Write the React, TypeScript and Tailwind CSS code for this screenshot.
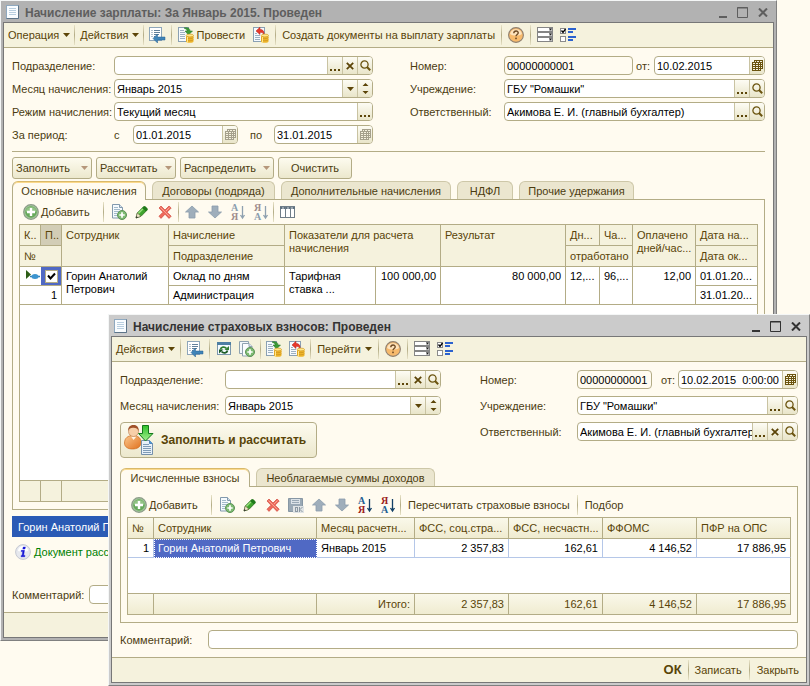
import type { ReactNode } from "react";
import { clsx } from "clsx";

/* ---------- icons ---------- */

function Svg({ children, size = 16 }: { children: ReactNode; size?: number }) {
  return (
    <svg width={size} height={size} viewBox={`0 0 ${size} ${size}`} className="block shrink-0 overflow-visible" aria-hidden="true">
      {children}
    </svg>
  );
}

function Caret({ color = "#5c4508" }: { color?: string }) {
  return (
    <svg width="7" height="4" viewBox="0 0 7 4" className="block shrink-0" aria-hidden="true">
      <path d="M0 0h7L3.5 4z" fill={color} />
    </svg>
  );
}

function DocIcon() {
  return (
    <Svg>
      <rect x="1.5" y="1.5" width="12" height="13" fill="#fafdff" stroke="#8fa9c0" />
      <path d="M1.5 14.5h12v-13" fill="none" stroke="#5d7488" />
      <path d="M4 4.5h7M4 6.5h7M4 8.5h7M4 10.5h7" stroke="#b9cfe0" />
    </Svg>
  );
}

function ReturnIcon() {
  return (
    <Svg>
      <rect x="0.5" y="0.5" width="12" height="13" fill="#fff" stroke="#8ea6b9" />
      <path d="M2.5 3.5h1M2.5 5.5h1M2.5 7.5h1M2.5 9.5h1M5 3.5h6M5 5.5h6M5 7.5h5M5 9.5h1" stroke="#62809a" />
      <path d="M4 11.5l4.500-4.500v3H16v3H8.500v3z" fill="#3f84b8" stroke="#2a6290" strokeWidth="0.5" />
    </Svg>
  );
}

function Coins() {
  return (
    <>
      <path d="M8 8.5v6c0 .8 1.600 1.300 3.800 1.300s3.700-.5 3.700-1.300v-6z" fill="#eeb62c" />
      <ellipse cx="11.8" cy="8.5" rx="3.7" ry="1.4" fill="#ffe78a" stroke="#c98f1a" strokeWidth="0.6" />
      <path d="M8 10.6c.6 1.400 6.800 1.400 7.500 0M8 12.700c.6 1.400 6.800 1.400 7.500 0" fill="none" stroke="#c58a1a" strokeWidth="0.6" />
      <path d="M9.500 10v5.500" stroke="#ffe68c" />
    </>
  );
}

function PostIcon() {
  return (
    <Svg>
      <rect x="0.5" y="0.5" width="10" height="14" fill="#f6fafd" stroke="#8aa0b3" />
      <path d="M2 3.5h4M2 5.5h5M2 7.5h5M2 9.5h5M2 11.5h5" stroke="#9cb0c2" />
      <path d="M6 1c3-1 6 0 6 3h2.500L10.500 8 7 4h2.200C9 2.800 8 1.800 6 1z" fill="#3a9a35" stroke="#1f6e20" strokeWidth="0.5" />
      <Coins />
    </Svg>
  );
}

function UnpostIcon() {
  return (
    <Svg>
      <rect x="0.5" y="0.5" width="11" height="14" fill="#f6fafd" stroke="#8aa0b3" />
      <path d="M2 6.500h2M2 8.500h5M2 10.500h5M2 12.500h5" stroke="#9cb0c2" />
      <path d="M3 4l4-3.800v2.300c3 0 4.500 1.800 4 5.500-.8-2-1.800-2.700-4-2.700v2.200z" fill="#e8392b" stroke="#b51f16" strokeWidth="0.5" />
      <Coins />
    </Svg>
  );
}

function HelpIcon() {
  return (
    <Svg>
      <circle cx="8" cy="8" r="7.4" fill="#f7ba6c" stroke="#8f8071" strokeWidth="1.1" />
      <path d="M2 7a6.200 6.200 0 0 1 12 0c-3 2-9 2-12 0z" fill="#fde3bd" />
      <path d="M5.800 6.200c0-3 4.600-2.800 4.400-.2-.1 1.500-2.200 1.600-2.200 3.300" fill="none" stroke="#6e4a24" strokeWidth="1.4" />
      <rect x="7.2" y="10.6" width="1.6" height="1.6" fill="#6e4a24" />
    </Svg>
  );
}

function ListIcon() {
  return (
    <Svg>
      {[0, 5, 10].map((y) => (
        <g key={y}>
          <rect x="0.5" y={y + 0.5} width="15" height="4" fill="#fff" stroke="#858585" />
          <rect x="12" y={y + 1} width="3" height="3" fill="#c4c4c4" />
          <path d={`M12 ${y + 1.500}h3l-1.500 2z`} fill="#1d1d1d" />
        </g>
      ))}
    </Svg>
  );
}

function ChecksIcon() {
  return (
    <Svg>
      <rect x="0.5" y="1.5" width="5" height="5" fill="#fff" stroke="#8b8b8b" />
      <path d="M1.500 3.500l1.500 2 2.500-3.500" fill="none" stroke="#000" strokeWidth="1.3" />
      <rect x="0.5" y="9.5" width="5" height="5" fill="#fff" stroke="#8b8b8b" />
      <path d="M8 2h8M8 10h8M8 5h5M8 13h5" stroke="#2b62cf" strokeWidth="2" />
    </Svg>
  );
}

function RefreshIcon() {
  return (
    <Svg>
      <rect x="1.5" y="2.5" width="13" height="11" fill="#f4faff" stroke="#7c97ad" />
      <path d="M1 2.500h14" stroke="#4d7ea3" strokeWidth="3" />
      <path d="M4.500 8.500c.5-2.500 4-3.200 6-1" fill="none" stroke="#2f7d32" strokeWidth="1.8" />
      <path d="M8.500 9h4.500V5z" fill="#2f7d32" />
      <path d="M11.500 9.500c-.5 2.500-4 3.200-6 1" fill="none" stroke="#1d5c26" strokeWidth="1.8" />
      <path d="M7.500 8.500H3v4z" fill="#1d5c26" />
    </Svg>
  );
}

function PlusBadge() {
  return (
    <>
      <circle cx="11" cy="11" r="4.5" fill="#7dbb72" stroke="#5c9157" />
      <path d="M11 8.300v5.400M8.300 11h5.400" stroke="#fff" strokeWidth="1.7" />
    </>
  );
}

function CopyIcon() {
  return (
    <Svg>
      <path d="M0.500 0.500h9v12h-9z" fill="#f3f8fb" stroke="#8fa2b0" />
      <path d="M3.500 2.500h6.500l3 3v9.500h-9.500z" fill="#fbfdff" stroke="#8fa2b0" />
      <path d="M10 2.500v3h3" fill="#dfe9f0" stroke="#8fa2b0" />
      <PlusBadge />
    </Svg>
  );
}

function AddDocIcon() {
  return (
    <Svg>
      <path d="M1.500 0.500h7l3 3v10.500h-10z" fill="#f5fafd" stroke="#8299ad" />
      <path d="M8.500 0.500v3h3" fill="#d5e2ec" stroke="#8299ad" />
      <path d="M3 3.500h4M3 5.500h6M3 7.500h5M3 9.500h3M3 11.500h3" stroke="#a3bacb" />
      <PlusBadge />
    </Svg>
  );
}

function AddIcon() {
  return (
    <Svg>
      <circle cx="8" cy="8" r="7.3" fill="#a3c79a" stroke="#8c9c88" strokeWidth="1.2" />
      <circle cx="8" cy="8" r="5.8" fill="#67a95c" />
      <path d="M2.500 7.500a5.600 5.600 0 0 1 11 0c-3 1.500-8 1.500-11 0z" fill="#93c486" />
      <path d="M8 4v8M4 8h8" stroke="#fff" strokeWidth="2.4" />
    </Svg>
  );
}

function PencilIcon() {
  return (
    <Svg>
      <path d="M2 14l1.300-5L9.500 2.800c1.200-1 4.500 1.700 3.700 3.200L7 12.300z" fill="#3fa52e" stroke="#2a6d20" strokeWidth="0.8" />
      <path d="M4.300 9.500l6-6" stroke="#9be07f" strokeWidth="1.3" />
      <path d="M9.500 2.800c1.200-1 4.500 1.700 3.700 3.200l-1.300 1.200-3.700-3z" fill="#1f7a1b" />
      <path d="M2 14l1.300-5 3.700 3.300z" fill="#f4ecd0" stroke="#69623e" strokeWidth="0.6" />
      <path d="M2 14l.5-2 1.500 1.400z" fill="#222" />
    </Svg>
  );
}

function DeleteIcon() {
  return (
    <Svg>
      <path d="M2 4l2-2 4 4 4-4 2.200 2-4.200 4.200 4.200 4-2.200 2.200-4-4.200-4 4.200-2-2.200 4-4z" fill="#ee6a5b" stroke="#d04a40" strokeWidth="0.7" />
      <path d="M3.500 3.500l9 9M12.500 3.500l-3.500 3.500" stroke="#f9a393" />
    </Svg>
  );
}

function ArrowIcon({ down }: { down?: boolean }) {
  return (
    <Svg>
      <path
        d={down ? "M8 14L1.500 8H5V2h6v6h3.500z" : "M8 2l6.500 6H11v6H5V8H1.500z"}
        fill="#9faebb"
        stroke="#8b9dac"
        strokeWidth="0.8"
      />
    </Svg>
  );
}

function SortIcon({ top, bottom, active }: { top: string; bottom: string; active?: boolean }) {
  const color = (letter: string) => (active ? (letter === "А" ? "#1f5f93" : "#9b1d1d") : letter === "А" ? "#8b9eae" : "#a08d8d");
  return (
    <Svg>
      <g fontFamily="'Liberation Serif', serif" fontSize="10" fontWeight="bold">
        <text x="1" y="7" fill={color(top)}>{top}</text>
        <text x="1" y="16" fill={color(bottom)}>{bottom}</text>
      </g>
      <path d="M12.500 2v11M10.500 11l2 3 2-3" fill="none" stroke={active ? "#123f66" : "#8fa1b0"} strokeWidth="1.3" />
    </Svg>
  );
}

function TableIcon() {
  return (
    <Svg>
      <rect x="0.5" y="2.5" width="14" height="11" fill="#fff" stroke="#6f7d88" />
      <path d="M0 4h15" stroke="#60717f" strokeWidth="2" />
      <path d="M2 4h2M7 4h2M11 4h2" stroke="#d5dde3" />
      <path d="M5.500 3v10M10.500 3v10" stroke="#6f7d88" />
    </Svg>
  );
}

function SaveIcon() {
  return (
    <Svg>
      <path d="M0.500 1.500h14v13h-14z" fill="#9aa9b5" stroke="#8797a4" />
      <rect x="3" y="2" width="9" height="5" fill="#dbe2e7" />
      <path d="M4 3.500h7M4 5.500h7" stroke="#9aa9b5" />
      <rect x="5" y="9" width="11" height="7" fill="#dfe3e4" />
      <g fill="none" stroke="#8b98a2">
        <rect x="7.5" y="10.5" width="2" height="4" />
        <path d="M11.500 10v5M14.500 10l-2.500 2.500 2.500 2.500" />
      </g>
    </Svg>
  );
}

function CalendarIcon({ dim }: { dim?: boolean }) {
  const c = dim ? "#a5a08c" : "#6b540f";
  return (
    <svg width="11" height="11" viewBox="0 0 11 11" className="block" aria-hidden="true">
      <path d="M2 0h9v9H9v2H0V2h2z" fill={c} />
      <path
        d="M3 1h1v1H3zM5 1h2v1H5zM8 1h2v1H8zM1 3h2v1H1zM4 3h2v1H4zM7 3h1v1H7zM9 3h1v1H9zM1 5h2v1H1zM4 5h2v1H4zM7 5h1v1H7zM9 5h1v1H9zM1 7h2v1H1zM4 7h2v1H4zM7 7h1v1H7zM9 7h1v1H9zM1 9h2v1H1zM4 9h2v1H4zM7 9h1v1H7z"
        fill="#f6f2df"
      />
    </svg>
  );
}

function SearchIcon() {
  return (
    <svg width="11" height="11" viewBox="0 0 11 11" className="block" aria-hidden="true">
      <circle cx="4.5" cy="4.5" r="3.6" fill="none" stroke="#6b540f" strokeWidth="1.3" />
      <path d="M7 7l3.200 3.200" stroke="#6b540f" strokeWidth="2" />
    </svg>
  );
}

function ClearIcon() {
  return (
    <svg width="8" height="8" viewBox="0 0 8 8" className="block" aria-hidden="true">
      <path d="M0.800 0.800l6.400 6.400M7.200 0.800l-6.400 6.400" stroke="#5c4508" strokeWidth="1.8" />
    </svg>
  );
}

function DotsIcon() {
  return (
    <svg width="10" height="10" viewBox="0 0 10 10" className="block" aria-hidden="true">
      <path d="M0 8h2v2H0zM4 8h2v2H4zM8 8h2v2H8z" fill="#5c4508" />
    </svg>
  );
}

function SpinIcon() {
  return (
    <svg width="7" height="11" viewBox="0 0 7 11" className="block" aria-hidden="true">
      <path d="M0.500 3h6L3.500 0zM0.500 8h6L3.500 11z" fill="#5c4508" />
    </svg>
  );
}

function PersonIcon() {
  return (
    <svg width="30" height="30" viewBox="0 0 30 30" className="block shrink-0" aria-hidden="true">
      <defs>
        <linearGradient id="coat" x1="0" y1="0" x2="1" y2="1">
          <stop offset="0" stopColor="#fbc98f" />
          <stop offset="1" stopColor="#e0701c" />
        </linearGradient>
        <linearGradient id="down" x1="0" y1="0" x2="0" y2="1">
          <stop offset="0" stopColor="#2fc02a" />
          <stop offset="1" stopColor="#a4f08e" />
        </linearGradient>
      </defs>
      <path d="M0.500 18c0-5 3.500-7.500 8.500-7.500s8 2.500 8 7-4 6.500-8.500 6.500-8-2-8-6z" fill="url(#coat)" stroke="#cf6a1c" strokeWidth="0.7" />
      <path d="M7 11.500l2.500 3.500 3-3.500z" fill="#fff3e2" />
      <circle cx="9.500" cy="6.500" r="5" fill="#f7cfa8" stroke="#b5794b" strokeWidth="0.6" />
      <path d="M4 6c-.5-8 11.500-8.500 10.700 0-1-2.500-3-3.500-6-3.200C6.500 3 5 3.500 4 6z" fill="#a0512a" />
      <path d="M17.500 15.500h8l3 3v11h-11z" fill="#e7f0f8" stroke="#7590ab" />
      <path d="M25.500 15.500v3h3" fill="#4e9be0" stroke="#4e86ba" />
      <path d="M19 19.500h6M19 21.500h8M19 23.500h8M19 25.500h8M19 27.500h8" stroke="#7f9bb6" />
      <path d="M18.500 0.500h6v8H29L21.500 16 14.500 8.500h4z" fill="url(#down)" stroke="#12781a" />
    </svg>
  );
}

function InfoIcon() {
  return (
    <Svg>
      <circle cx="8" cy="8" r="7.4" fill="#e6e8ee" stroke="#c6c9d2" />
      <path d="M3 7a5 5 0 0 1 10 0c-3 1-7 1-10 0z" fill="#fff" />
      <path d="M8.200 3h2.200l-.4 2H7.800zM6.300 6.300h3.200L8.600 11.400H10l-.2 1.300H6l.2-1.300h.9l.6-3.800H6.100z" fill="#1313d6" stroke="#1313d6" strokeWidth="0.4" />
    </Svg>
  );
}

/* ---------- shared controls ---------- */

function Sep({ className }: { className?: string }) {
  return <span className={clsx("h-5 w-px shrink-0 bg-linear-to-b from-[#e8e3c8] via-[#b3ac86] to-[#e8e3c8]", className)} />;
}

function IconButton({ label, children }: { label: string; children: ReactNode }) {
  return (
    <button type="button" aria-label={label} className="shrink-0">
      {children}
    </button>
  );
}

function MenuButton({ children }: { children: ReactNode }) {
  return (
    <button type="button" className="flex items-center gap-1 whitespace-nowrap">
      {children}
      <Caret />
    </button>
  );
}

type Action = "dots" | "clear" | "search" | "drop" | "spin" | "calendar" | "calendarDim";

const actions: Record<Action, { label: string; icon: ReactNode }> = {
  dots: { label: "Выбрать", icon: <DotsIcon /> },
  clear: { label: "Очистить поле", icon: <ClearIcon /> },
  search: { label: "Открыть", icon: <SearchIcon /> },
  drop: { label: "Показать список", icon: <Caret /> },
  spin: { label: "Изменить значение", icon: <SpinIcon /> },
  calendar: { label: "Календарь", icon: <CalendarIcon /> },
  calendarDim: { label: "Календарь", icon: <CalendarIcon dim /> },
};

interface FieldProps {
  id: string;
  value?: string;
  buttons?: Action[];
  className?: string;
  readOnly?: boolean;
}

function Field({ id, value = "", buttons = [], className = "flex-1", readOnly }: FieldProps) {
  return (
    <div
      className={clsx(
        "flex h-[19px] min-w-0 overflow-hidden rounded border border-[#b3ac86]",
        readOnly ? "bg-[#fffbf0]" : "bg-white",
        className,
      )}
    >
      <input
        id={id}
        defaultValue={value}
        readOnly={readOnly}
        className="w-full min-w-0 flex-1 bg-transparent pl-0.5 text-black outline-none"
      />
      {buttons.map((b) => (
        <button
          key={b}
          type="button"
          aria-label={actions[b].label}
          className="flex w-[15px] shrink-0 items-center justify-center border-l border-[#c9c3a2] bg-linear-to-b from-[#fdfcf4] to-[#e9e5c9]"
        >
          {actions[b].icon}
        </button>
      ))}
    </div>
  );
}

function Row({ id, label, labelClass, children }: { id: string; label: string; labelClass: string; children: ReactNode }) {
  return (
    <div className="flex items-center">
      <label htmlFor={id} className={clsx("shrink-0 whitespace-nowrap", labelClass)}>
        {label}
      </label>
      {children}
    </div>
  );
}

function Tabs({ items }: { items: { title: string; width: string }[] }) {
  return (
    <div role="tablist" className="flex items-end gap-1.5">
      {items.map(({ title, width }, i) => (
        <button
          key={title}
          type="button"
          role="tab"
          aria-selected={i === 0}
          className={clsx(
            "rounded-t-md border border-b-0 text-center whitespace-nowrap",
            width,
            i === 0
              ? "relative -mb-px h-[19px] border-[#b3ac86] border-t-[#d9b96a] bg-[#fffbf0] shadow-[inset_0_1px_0_#fbd98c]"
              : "h-[18px] border-[#cdc7a8] bg-[#ebe6cf]",
          )}
        >
          {title}
        </button>
      ))}
    </div>
  );
}

function Window({ title, active, className, children }: { title: string; active?: boolean; className: string; children: ReactNode }) {
  return (
    <section
      className={clsx(
        "border border-t-[#f4f6f6] border-r-[#808080] border-b-[#808080] border-l-[#f4f6f6] px-0.5 pb-0.5",
        active ? "bg-[#cbcbcb] text-[#333]" : "bg-[#b2b2b2] text-[#5e5e5e]",
        className,
      )}
    >
      <header className="flex h-[21px] items-center pl-0.5">
        <DocIcon />
        <h1 className="ml-1 flex-1 truncate pt-0.5 text-[12px] font-bold">{title}</h1>
        <div className="flex items-center gap-2.5 pt-0.5 pr-1.5">
          <button type="button" aria-label="Свернуть" className="pt-2">
            <svg width="8" height="2" className="block"><path d="M0 1h8" stroke="currentColor" strokeWidth="2" /></svg>
          </button>
          <button type="button" aria-label="Развернуть">
            <svg width="11" height="11" className="block">
              <path d="M.5 .5h10v10H.5zM0 1h11" fill="none" stroke="currentColor" />
            </svg>
          </button>
          <button type="button" aria-label="Закрыть окно">
            <svg width="10" height="9" className="block"><path d="M1 .5l8 8M9 .5l-8 8" stroke="currentColor" strokeWidth="2" /></svg>
          </button>
        </div>
      </header>
      <div className="border border-[#777] bg-[#fffbf0] text-[#4b3c10]">{children}</div>
    </section>
  );
}

function Toolbar({ children }: { children: ReactNode }) {
  return (
    <div className="flex h-[25px] items-center border-b border-[#b3ac86] bg-[#f5f2dd] pl-1 text-[#594408]">{children}</div>
  );
}

function AddButton() {
  return (
    <button type="button" className="flex w-[75px] shrink-0 items-center gap-0.5 whitespace-nowrap">
      <AddIcon />
      <span>
        <u>Д</u>обавить
      </span>
    </button>
  );
}

/* ---------- payroll window ---------- */

const cell = "border-r border-b border-[#b3ac86]";
const th = `${cell} px-1 pt-1 text-left align-top font-normal whitespace-nowrap`;
const td = `${cell} px-1 pt-[3px] text-left align-top whitespace-nowrap`;
const tdNum = `${cell} pt-[3px] pr-1 text-right align-top whitespace-nowrap`;

function PayrollTable() {
  return (
    <table className="w-full table-fixed border-separate border-spacing-0 border-t border-l border-[#b3ac86] bg-white leading-[13px] text-black">
      <colgroup>
        <col className="w-[21px]" />
        <col className="w-[21px]" />
        <col className="w-[107px]" />
        <col className="w-[116px]" />
        <col className="w-[91px]" />
        <col className="w-[65px]" />
        <col />
        <col className="w-[34px]" />
        <col className="w-[33px]" />
        <col className="w-[63px]" />
        <col className="w-[62px]" />
      </colgroup>
      <thead className="bg-[#f5f2dd] text-[#594408]">
        <tr className="h-[21px]">
          <th className={th}>К..</th>
          <th className={clsx(th, "bg-[#d2cdb6]")}>П..</th>
          <th rowSpan={2} className={th}>Сотрудник</th>
          <th className={th}>Начисление</th>
          <th rowSpan={2} colSpan={2} className={th}>
            Показатели для расчета
            <br />
            начисления
          </th>
          <th rowSpan={2} className={th}>Результат</th>
          <th className={th}>Дн...</th>
          <th className={th}>Ча...</th>
          <th rowSpan={2} className={th}>
            Оплачено
            <br />
            дней/час...
          </th>
          <th className={th}>Дата на...</th>
        </tr>
        <tr className="h-[21px]">
          <th colSpan={2} className={th}>№</th>
          <th className={th}>Подразделение</th>
          <th colSpan={2} className={th}>отработано</th>
          <th className={th}>Дата ок...</th>
        </tr>
      </thead>
      <tbody>
        <tr className="h-[19px]">
          <td className="border-b border-[#b3ac86] p-0">
            <svg width="20" height="18" viewBox="0 0 20 18" className="block" aria-hidden="true">
              <path d="M6 3v9l5-4.500z" fill="#2c5d16" />
              <path d="M10 9.500h10" stroke="#2f7fb5" strokeWidth="1.5" />
              <ellipse cx="15" cy="9.500" rx="3.500" ry="2.500" fill="#3c94cf" />
            </svg>
          </td>
          <td className="border-r border-b border-[#b3ac86] bg-[#5069c4] p-0">
            <label className="relative mx-auto block size-[13px]">
              <input
                type="checkbox"
                defaultChecked
                aria-label="Проверено"
                className="peer block size-[13px] appearance-none border border-[#b3ac86] bg-white"
              />
              <svg width="13" height="13" viewBox="0 0 13 13" className="absolute inset-0 hidden peer-checked:block" aria-hidden="true">
                <path d="M3 5.500l2.500 3 4.500-5" fill="none" stroke="#000" strokeWidth="2" />
              </svg>
            </label>
          </td>
          <td rowSpan={2} className={td}>
            Горин Анатолий
            <br />
            Петрович
          </td>
          <td className={td}>Оклад по дням</td>
          <td rowSpan={2} className={td}>
            Тарифная
            <br />
            ставка ...
          </td>
          <td rowSpan={2} className={tdNum}>100 000,00</td>
          <td rowSpan={2} className={tdNum}>80 000,00</td>
          <td rowSpan={2} className={td}>12,...</td>
          <td rowSpan={2} className={td}>96,...</td>
          <td rowSpan={2} className={tdNum}>12,00</td>
          <td className={td}>01.01.20...</td>
        </tr>
        <tr className="h-[19px]">
          <td colSpan={2} className={tdNum}>1</td>
          <td className={td}>Администрация</td>
          <td className={td}>31.01.20...</td>
        </tr>
        <tr className="h-44">
          <td colSpan={11} className={cell} />
        </tr>
      </tbody>
      <tfoot className="bg-[#f5f2dd]">
        <tr className="h-[21px]">
          <td className={cell} />
          <td className={cell} />
          <td className={cell} colSpan={2} />
          <td className={cell} colSpan={2} />
          <td className={cell} />
          <td className={cell} />
          <td className={cell} />
          <td className={cell} />
          <td className={cell} />
        </tr>
      </tfoot>
    </table>
  );
}

const commandButton =
  "flex h-[22px] items-center rounded-[3px] border border-[#b3ac86] bg-linear-to-b from-[#fdfbef] to-[#ece8cd] px-[3px] whitespace-nowrap";

function PayrollWindow() {
  return (
    <Window title="Начисление зарплаты: За Январь 2015. Проведен" className="mr-[33px]">
      <Toolbar>
        <MenuButton>Операция</MenuButton>
        <Sep className="mr-[5px] ml-1" />
        <MenuButton>Действия</MenuButton>
        <Sep className="mr-[5px] ml-1" />
        <IconButton label="Вернуться"><ReturnIcon /></IconButton>
        <Sep className="mx-1.5" />
        <button type="button" className="flex items-center gap-0.5">
          <PostIcon />
          Провести
        </button>
        <span className="w-2" />
        <IconButton label="Отмена проведения"><UnpostIcon /></IconButton>
        <Sep className="mx-1.5" />
        <button type="button" className="whitespace-nowrap">Создать документы на выплату зарплаты</button>
        <Sep className="mx-1.5" />
        <IconButton label="Справка"><HelpIcon /></IconButton>
        <Sep className="mx-1.5" />
        <IconButton label="Список"><ListIcon /></IconButton>
        <span className="w-[7px]" />
        <IconButton label="Настройка"><ChecksIcon /></IconButton>
      </Toolbar>

      <div className="px-2 pt-2">
        <form className="flex items-start gap-[37px]">
          <div className="flex w-[361px] shrink-0 flex-col gap-1">
            <Row id="p-dept" label="Подразделение:" labelClass="w-[102px]">
              <Field id="p-dept" buttons={["dots", "clear", "search"]} />
            </Row>
            <Row id="p-month" label="Месяц начисления:" labelClass="w-[102px]">
              <Field id="p-month" value="Январь 2015" buttons={["drop", "spin"]} />
            </Row>
            <Row id="p-mode" label="Режим начисления:" labelClass="w-[102px]">
              <Field id="p-mode" value="Текущий месяц" buttons={["dots"]} />
            </Row>
            <div className="flex items-center">
              <span className="w-[102px]">За период:</span>
              <label htmlFor="p-from" className="w-[19px]">с</label>
              <Field id="p-from" value="01.01.2015" buttons={["calendarDim"]} className="w-[105px]" />
              <label htmlFor="p-to" className="ml-3 flex-1">по</label>
              <Field id="p-to" value="31.01.2015" buttons={["calendarDim"]} className="w-[99px]" />
            </div>
          </div>
          <div className="flex min-w-0 flex-1 flex-col gap-1">
            <Row id="p-num" label="Номер:" labelClass="w-[94px]">
              <Field id="p-num" value="00000000001" readOnly />
              <label htmlFor="p-date" className="mx-[3px] w-[15px] shrink-0">от:</label>
              <Field id="p-date" value="10.02.2015" buttons={["calendar"]} className="w-[111px]" />
            </Row>
            <Row id="p-org" label="Учреждение:" labelClass="w-[94px]">
              <Field id="p-org" value={'ГБУ "Ромашки"'} buttons={["dots", "search"]} />
            </Row>
            <Row id="p-resp" label="Ответственный:" labelClass="w-[94px]">
              <Field id="p-resp" value="Акимова Е. И. (главный бухгалтер)" buttons={["dots", "search"]} />
            </Row>
          </div>
        </form>

        <hr className="mt-[7px] border-[#b3ac86]" />

        <div className="mt-[5px] flex gap-1">
          <button type="button" className={clsx(commandButton, "w-20 justify-between")}>
            Заполнить <Caret color="#b5977a" />
          </button>
          <button type="button" className={clsx(commandButton, "w-20 justify-between")}>
            Рассчитать <Caret color="#b5977a" />
          </button>
          <button type="button" className={clsx(commandButton, "w-[94px] justify-between")}>
            Распределить <Caret color="#b5977a" />
          </button>
          <button type="button" className={clsx(commandButton, "w-[74px] justify-center")}>Очистить</button>
        </div>

        <div className="mt-0.5">
          <Tabs
            items={[
              { title: "Основные начисления", width: "w-[134px]" },
              { title: "Договоры (подряда)", width: "w-[123px]" },
              { title: "Дополнительные начисления", width: "w-[170px]" },
              { title: "НДФЛ", width: "w-14" },
              { title: "Прочие удержания", width: "w-[115px]" },
            ]}
          />
          <div className="border border-[#b3ac86] px-1.5 pb-[7px]">
            <div className="flex h-6 items-center pl-1">
              <AddButton />
              <Sep className="mr-[7px] ml-[5px]" />
              <div className="flex gap-[7px]">
                <IconButton label="Скопировать"><AddDocIcon /></IconButton>
                <IconButton label="Изменить"><PencilIcon /></IconButton>
                <IconButton label="Удалить"><DeleteIcon /></IconButton>
              </div>
              <Sep className="mx-[5px]" />
              <div className="flex gap-[7px]">
                <IconButton label="Вверх"><ArrowIcon /></IconButton>
                <IconButton label="Вниз"><ArrowIcon down /></IconButton>
                <IconButton label="По возрастанию"><SortIcon top="А" bottom="Я" /></IconButton>
                <IconButton label="По убыванию"><SortIcon top="Я" bottom="А" /></IconButton>
              </div>
              <Sep className="mr-1.5 ml-1" />
              <IconButton label="Колонки"><TableIcon /></IconButton>
            </div>
            <PayrollTable />
          </div>
        </div>

        <div className="mt-1.5 flex h-[21px] items-center bg-[#2a5ab5] px-1.5 text-white">Горин Анатолий Петрович</div>
        <div className="flex h-12 items-start gap-[3px] px-[3px] pt-[7px] text-[#008000]">
          <InfoIcon />
          Документ рассчитан
        </div>
        <Row id="p-comment" label="Комментарий:" labelClass="w-[77px]">
          <Field id="p-comment" />
        </Row>
      </div>
      <footer className="mt-2 h-[25px] border-t border-[#b3ac86] bg-[#f5f2dd]" />
    </Window>
  );
}

/* ---------- contributions window ---------- */

const columns = ["№", "Сотрудник", "Месяц расчетн...", "ФСС, соц.стра...", "ФСС, несчастн...", "ФФОМС", "ПФР на ОПС"];
const amounts = ["2 357,83", "162,61", "4 146,52", "17 886,95"];

function ContributionsTable() {
  return (
    <table className="w-full table-fixed border-separate border-spacing-0 border-t border-l border-[#b3ac86] bg-white leading-[13px] text-black">
      <colgroup>
        <col className="w-[26px]" />
        <col />
        <col className="w-[98px]" />
        <col className="w-[94px]" />
        <col className="w-[94px]" />
        <col className="w-[94px]" />
        <col className="w-[94px]" />
      </colgroup>
      <thead className="bg-linear-to-b from-[#faf8ea] to-[#efebcf] text-[#594408]">
        <tr className="h-[21px]">
          {columns.map((c) => (
            <th key={c} className={clsx(cell, "px-1 text-left font-normal whitespace-nowrap")}>{c}</th>
          ))}
        </tr>
      </thead>
      <tbody>
        <tr className="h-[19px]">
          <td className="border-r border-b border-[#b5c7e8] py-0 pr-1 text-right">1</td>
          <td className="border border-dotted border-white bg-[#5069c4] px-[3px] py-0 text-white">Горин Анатолий Петрович</td>
          <td className="border-r border-b border-[#b5c7e8] px-1 py-0">Январь 2015</td>
          {amounts.map((a) => (
            <td key={a} className="border-r border-b border-[#b5c7e8] py-0 pr-1 text-right last:border-r-[#b3ac86]">
              {a}
            </td>
          ))}
        </tr>
        <tr className="h-9">
          <td colSpan={7} className={cell} />
        </tr>
      </tbody>
      <tfoot className="bg-linear-to-b from-[#faf8ea] to-[#efebcf] text-[#594408]">
        <tr className="h-[21px]">
          <td className={cell} />
          <td className={cell} />
          <td className={clsx(cell, "py-0 pr-1 text-right")}>Итого:</td>
          {amounts.map((a) => (
            <td key={a} className={clsx(cell, "py-0 pr-1 text-right")}>{a}</td>
          ))}
        </tr>
      </tfoot>
    </table>
  );
}

function ContributionsWindow() {
  return (
    <Window title="Начисление страховых взносов: Проведен" active className="absolute top-[314px] right-0 left-[108px]">
      <Toolbar>
        <MenuButton>Действия</MenuButton>
        <Sep className="mr-1.5 ml-[5px]" />
        <IconButton label="Вернуться"><ReturnIcon /></IconButton>
        <Sep className="mx-1.5" />
        <IconButton label="Обновить"><RefreshIcon /></IconButton>
        <span className="w-[7px]" />
        <IconButton label="Скопировать"><CopyIcon /></IconButton>
        <Sep className="mx-[5px]" />
        <IconButton label="Провести"><PostIcon /></IconButton>
        <span className="w-[7px]" />
        <IconButton label="Отмена проведения"><UnpostIcon /></IconButton>
        <Sep className="mr-1.5 ml-[5px]" />
        <MenuButton>Перейти</MenuButton>
        <Sep className="mx-1.5" />
        <IconButton label="Справка"><HelpIcon /></IconButton>
        <Sep className="mx-1.5" />
        <IconButton label="Список"><ListIcon /></IconButton>
        <span className="w-[7px]" />
        <IconButton label="Настройка"><ChecksIcon /></IconButton>
      </Toolbar>

      <div className="px-2 pt-2">
        <form className="flex items-start gap-[39px]">
          <div className="flex w-[321px] shrink-0 flex-col gap-[7px]">
            <Row id="c-dept" label="Подразделение:" labelClass="w-[105px]">
              <Field id="c-dept" buttons={["dots", "clear", "search"]} />
            </Row>
            <Row id="c-month" label="Месяц начисления:" labelClass="w-[105px]">
              <Field id="c-month" value="Январь 2015" buttons={["drop", "spin"]} />
            </Row>
            <button
              type="button"
              className="flex h-9 w-[197px] items-center gap-[7px] rounded border border-[#b3ac86] bg-linear-to-b from-[#fdfbef] to-[#ece8cd] pl-[3px] text-[12px] font-bold whitespace-nowrap text-[#594408]"
            >
              <PersonIcon />
              Заполнить и рассчитать
            </button>
          </div>
          <div className="flex min-w-0 flex-1 flex-col gap-[7px]">
            <Row id="c-num" label="Номер:" labelClass="w-[97px]">
              <Field id="c-num" value="00000000001" readOnly className="w-[75px] shrink-0" />
              <label htmlFor="c-date" className="ml-[9px] w-[17px] shrink-0">от:</label>
              <Field id="c-date" value="10.02.2015  0:00:00" buttons={["calendar"]} />
            </Row>
            <Row id="c-org" label="Учреждение:" labelClass="w-[97px]">
              <Field id="c-org" value={'ГБУ "Ромашки"'} buttons={["dots", "search"]} />
            </Row>
            <Row id="c-resp" label="Ответственный:" labelClass="w-[97px]">
              <Field id="c-resp" value="Акимова Е. И. (главный бухгалтер)" buttons={["dots", "clear", "search"]} />
            </Row>
          </div>
        </form>

        <div className="mt-2.5">
          <Tabs
            items={[
              { title: "Исчисленные взносы", width: "w-[130px]" },
              { title: "Необлагаемые суммы доходов", width: "w-[179px]" },
            ]}
          />
          <div className="border border-[#b3ac86] px-1.5 pb-[7px]">
            <div className="flex h-[30px] items-center pt-1.5 pl-1">
              <AddButton />
              <Sep className="mr-[7px] ml-[5px]" />
              <div className="flex gap-[7px]">
                <IconButton label="Скопировать"><AddDocIcon /></IconButton>
                <IconButton label="Изменить"><PencilIcon /></IconButton>
                <IconButton label="Удалить"><DeleteIcon /></IconButton>
                <IconButton label="Записать строку"><SaveIcon /></IconButton>
                <IconButton label="Вверх"><ArrowIcon /></IconButton>
                <IconButton label="Вниз"><ArrowIcon down /></IconButton>
                <IconButton label="По возрастанию"><SortIcon top="А" bottom="Я" active /></IconButton>
                <IconButton label="По убыванию"><SortIcon top="Я" bottom="А" active /></IconButton>
              </div>
              <Sep className="mr-[7px] ml-1" />
              <button type="button" className="whitespace-nowrap">Пересчитать страховые взносы</button>
              <Sep className="mx-[7px]" />
              <button type="button">Подбор</button>
            </div>
            <ContributionsTable />
          </div>
        </div>

        <div className="mt-[7px]">
          <Row id="c-comment" label="Комментарий:" labelClass="w-[88px]">
            <Field id="c-comment" />
          </Row>
        </div>
      </div>
      <footer className="mt-2 flex h-[25px] items-center justify-end border-t border-[#b3ac86] bg-[#f5f2dd] pr-[7px] text-[#594408]">
        <button type="button" className="text-[13px] font-bold">ОК</button>
        <Sep className="mx-1.5" />
        <button type="button">Записать</button>
        <Sep className="mx-[7px]" />
        <button type="button">Закрыть</button>
      </footer>
    </Window>
  );
}

export default function App() {
  return (
    <main className="relative min-h-screen overflow-hidden bg-[#fffbf0] font-['Liberation_Sans',Arial,sans-serif] text-[11px] leading-4">
      <PayrollWindow />
      <ContributionsWindow />
    </main>
  );
}
